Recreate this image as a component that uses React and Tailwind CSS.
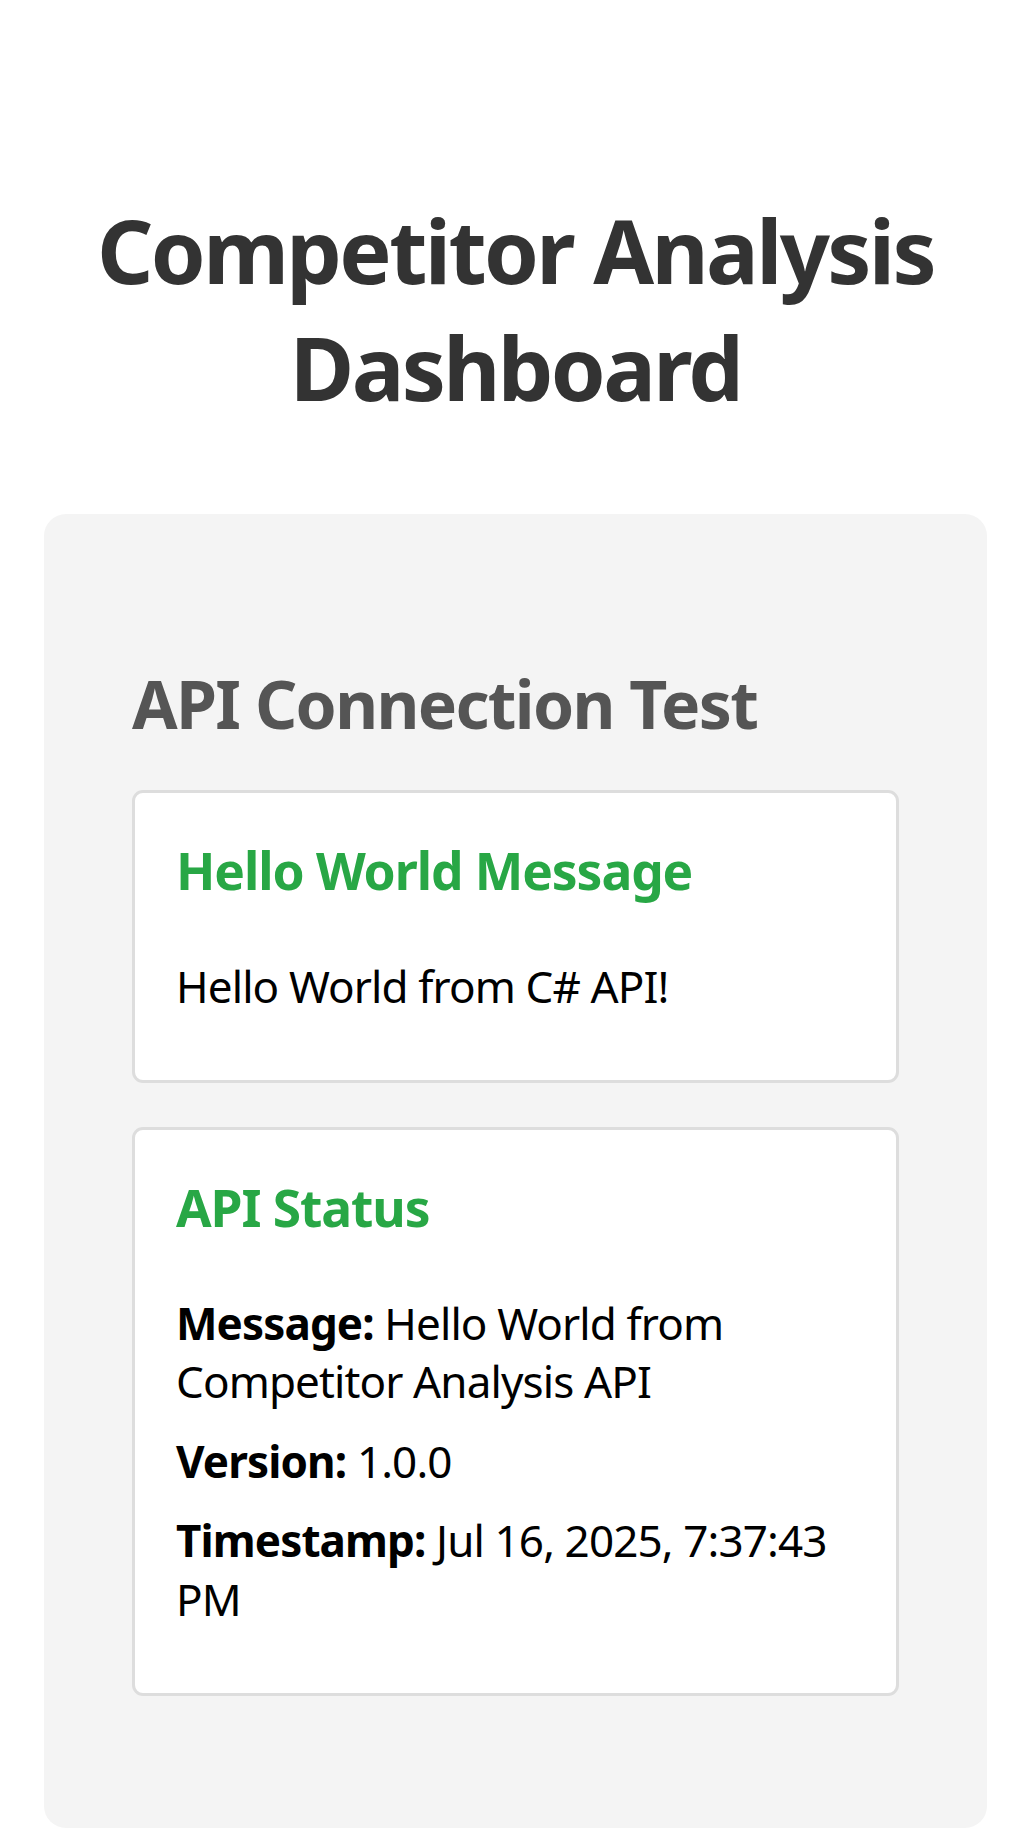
import React from "react";

const status = {
  message: "Hello World from Competitor Analysis API",
  version: "1.0.0",
  timestamp: "Jul 16, 2025, 7:37:43 PM",
};

const Card = ({ title, children }) => (
  <div className="rounded-[11px] border-[3px] border-[#dddddd] bg-white px-[41px] py-[43px]">
    <h3 className="text-[51.5px] font-bold leading-[68.5px] tracking-[-0.021em] text-[#28a745]">
      {title}
    </h3>
    <div className="mt-[52px] text-[44px] leading-[58.5px] tracking-[-0.02em]">{children}</div>
  </div>
);

export default function App() {
  return (
    <div className="min-h-screen bg-white pb-[5px] font-['Noto_Sans',sans-serif] text-black">
      <h1 className="px-[44px] pt-[192px] text-center text-[88px] font-bold leading-[117px] tracking-[-0.03em] text-[#333333]">
        Competitor Analysis Dashboard
      </h1>

      <div className="mx-[44px] mt-[88px] rounded-[22px] bg-[#f4f4f4] px-[88px] pt-[145px] pb-[88px]">
        <h2 className="text-[66px] font-bold leading-[88px] tracking-[-0.025em] text-[#555555]">
          API Connection Test
        </h2>

        <div className="mt-[43px] flex flex-col gap-[44px] pb-[44px]">
          <Card title="Hello World Message">
            <p className="mb-[22px]">Hello World from C# API!</p>
          </Card>

          <Card title="API Status">
            <div className="flex flex-col gap-[21px] pb-[22px]">
              <p>
                <strong>Message:</strong> {status.message}
              </p>
              <p>
                <strong>Version:</strong> {status.version}
              </p>
              <p>
                <strong>Timestamp:</strong> {status.timestamp}
              </p>
            </div>
          </Card>
        </div>
      </div>
    </div>
  );
}
